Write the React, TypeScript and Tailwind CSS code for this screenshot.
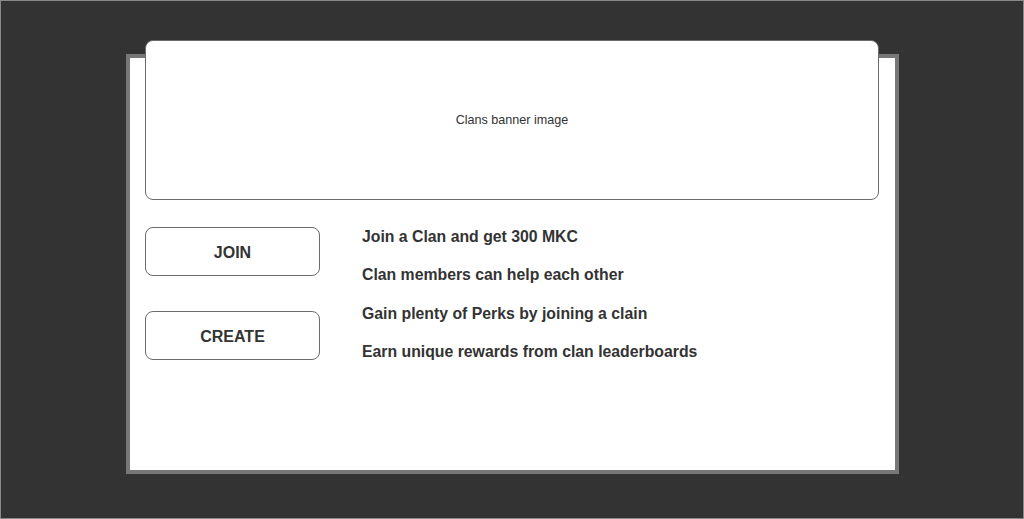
const perks = [
  "Join a Clan and get 300 MKC",
  "Clan members can help each other",
  "Gain plenty of Perks by joining a clain",
  "Earn unique rewards from clan leaderboards",
];

function ActionButton({ label }: { label: string }) {
  return (
    <button
      type="button"
      className="flex h-[49px] w-[175px] items-center justify-center rounded-[8px] border border-[#6b6b6b] bg-white pt-[2px] text-[16px] font-bold text-[#333]"
    >
      {label}
    </button>
  );
}

export default function App() {
  return (
    <div
      className="h-[519px] w-[1024px] overflow-hidden border border-[#8a8a8a] bg-[#333333]"
      style={{ fontFamily: '"Liberation Sans", Arial, sans-serif' }}
    >
      <div className="pl-[125px] pt-[53px]">
        <div className="h-[420px] w-[773px] border-4 border-[#777777] bg-white">
          <div className="-mt-[18px] ml-[15px] flex h-[160px] w-[734px] items-center justify-center rounded-[8px] border border-[#6b6b6b] bg-white text-[12.6px] text-[#333]">
            Clans banner image
          </div>
          <div className="ml-[15px] flex">
            <div className="mt-[27px] flex flex-col gap-[35px]">
              <ActionButton label="JOIN" />
              <ActionButton label="CREATE" />
            </div>
            <div className="ml-[42px] mt-[18px] flex flex-col text-[15.8px] font-bold leading-[38.4px] text-[#333]">
              {perks.map((p) => (
                <div key={p}>{p}</div>
              ))}
            </div>
          </div>
        </div>
      </div>
    </div>
  );
}
